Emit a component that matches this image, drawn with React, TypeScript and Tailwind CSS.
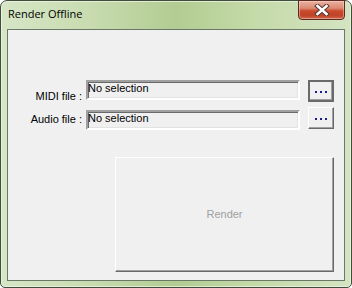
import React from "react";

const sans = { fontFamily: '"Liberation Sans", Arial, sans-serif' };

function CloseButton() {
  return (
    <div className="-mt-px w-[47px] h-[20px] rounded-b-[4px] border border-[#5a2a20] bg-[linear-gradient(to_bottom,#e9b2a2_0%,#dc8a72_40%,#c94a2c_55%,#c04428_80%,#d0684a_100%)] shadow-[inset_0_0_0_1px_rgba(255,220,210,0.45)] flex items-center justify-center">
      <svg width="16" height="12" viewBox="0 0 16 12">
        <path d="M3.5 2 L12.5 10 M12.5 2 L3.5 10" stroke="#5a3a34" strokeWidth="4.6" strokeLinecap="square" />
        <path d="M3.5 2 L12.5 10 M12.5 2 L3.5 10" stroke="#ffffff" strokeWidth="2.6" strokeLinecap="square" />
      </svg>
    </div>
  );
}

function Field() {
  return (
    <div
      className="w-[214px] h-[20px] border-2 border-t-[#a0a0a0] border-l-[#a0a0a0] border-b-white border-r-white bg-[#f0f0f0] shadow-[inset_1px_1px_0_#696969,inset_-1px_-1px_0_#e3e3e3] text-[11px] leading-[13px] text-black pl-0 whitespace-nowrap"
      style={sans}
    >
      No selection
    </div>
  );
}

function Dots() {
  return (
    <span className="flex gap-[3px] mt-[2px]">
      <span className="w-[2px] h-[2px] bg-[#1c1c8c]" />
      <span className="w-[2px] h-[2px] bg-[#1c1c8c]" />
      <span className="w-[2px] h-[2px] bg-[#1c1c8c]" />
    </span>
  );
}

export default function App() {
  return (
    <div className="w-[352px] h-[288px] bg-white">
      <div className="w-[352px] h-[288px] rounded-t-[7px] rounded-b-[5px] border border-[#3f4d3a] shadow-[inset_0_0_0_1px_rgba(240,248,232,0.7)] bg-[linear-gradient(to_right,#d6e6c6_0%,#c8dcb0_25%,#b2cc92_50%,#c4daa8_72%,#d4e4c2_100%)] px-[6px] pb-[6px] flex flex-col">
        <div className="h-[28px] flex items-start justify-between pl-px">
          <div
            className="pt-[5px] text-[11px] leading-[16px] text-black"
            style={{ fontFamily: '"Open Sans", "Noto Sans", sans-serif' }}
          >
            Render Offline
          </div>
          <CloseButton />
        </div>
        <div className="flex-1 border border-[#6a7868] bg-[#f0f0f0] pt-[50px]">
          <div className="flex items-start h-[22px]">
            <div
              className="w-[74px] mt-[10px] text-right text-[11px] leading-[13px] text-black whitespace-nowrap"
              style={sans}
            >
              MIDI file :
            </div>
            <div className="ml-[4px]">
              <Field />
            </div>
            <div className="ml-[8px] w-[26px] h-[22px] border-2 border-[#6a6a6a] bg-[#f0f0f0] shadow-[inset_-1px_-1px_0_#a0a0a0] flex items-center justify-center">
              <Dots />
            </div>
          </div>
          <div className="flex items-start h-[22px] mt-[5px]">
            <div
              className="w-[74px] mt-[6px] text-right text-[11px] leading-[13px] text-black whitespace-nowrap"
              style={sans}
            >
              Audio file :
            </div>
            <div className="ml-[4px] mt-[3px]">
              <Field />
            </div>
            <div className="ml-[8px] w-[26px] h-[22px] border border-t-white border-l-white border-b-[#696969] border-r-[#696969] bg-[#f0f0f0] shadow-[inset_-1px_-1px_0_#a0a0a0] flex items-center justify-center">
              <Dots />
            </div>
          </div>
          <div
            className="ml-[107px] mt-[28px] w-[219px] h-[115px] border border-t-white border-l-white border-b-[#696969] border-r-[#696969] bg-[#f0f0f0] shadow-[inset_-1px_-1px_0_#a0a0a0] flex items-center justify-center text-[11px] leading-[13px] text-[#a0a0a0]"
            style={sans}
          >
            Render
          </div>
        </div>
      </div>
    </div>
  );
}
